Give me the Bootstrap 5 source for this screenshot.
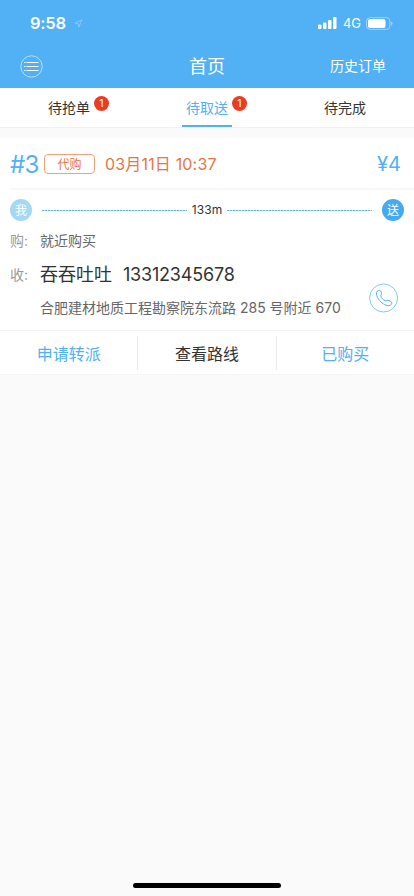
<!DOCTYPE html>
<html lang="zh-CN">
<head>
<meta charset="utf-8">
<meta name="viewport" content="width=device-width, initial-scale=1">
<title>首页</title>
<link href="https://cdn.jsdelivr.net/npm/bootstrap@5.3.0/dist/css/bootstrap.min.css" rel="stylesheet">
<style>
:root{--sky:#52b0f4;--ember:#e87544}
body{font-family:Inter,"Noto Sans CJK SC",sans-serif;font-size:14px;line-height:20px;color:#333;background:#fafafa;min-height:896px}
svg{display:block}
.app-header{background:var(--sky);height:88px}
.status-bar{height:44px;padding:2px 21px 0 30px}
.clock{font-size:16.5px;font-weight:600;letter-spacing:-.25px}
.signal-label{font-size:13px;font-weight:400;margin:0 5px 0 6px}
.title-bar{height:44px;padding:0 28px 0 20px}
.page-title{font-size:18px;font-weight:400;line-height:26px;padding-top:2px}
.side{width:80px}
.tab-strip{height:40px;border-bottom:1px solid #f0f0f0}
.tab-item{color:#333;height:39px;padding-top:10px}
.tab-item.active{color:var(--sky)}
.tab-line{width:50px;height:2px;background:var(--sky);bottom:0;left:50%;margin-left:-25px}
.count{width:15px;height:15px;left:46px;top:-3px;background:#e83c25;font-size:10.5px;line-height:15px}
.order{margin-top:10px;height:237px;border-bottom:1px solid #f4f4f4}
.order-head{height:52px;margin:0 0 0 11px;padding:2px 13px 0 0;border-bottom:2px solid #f8f8f8}
.num{font-size:24px;line-height:28px;padding-top:2px;color:var(--sky);width:33px;margin-left:-1px;letter-spacing:-.6px}
.kind{width:51px;height:20px;border:1px solid #f2a17d;border-radius:4px;color:var(--ember);font-size:12px;line-height:19px;margin-left:1px}
.when{font-size:16px;color:var(--ember);margin-left:10px;letter-spacing:.17px}
.price{font-size:20px;color:var(--sky)}
.route{height:40px;padding:0 10px}
.dot{width:22px;height:22px;color:#fff;font-size:12px;line-height:23px}
.dot-me{background:#a3d9f2}
.dot-to{background:#46aaf0}
.dash{height:1px;background:repeating-linear-gradient(90deg,#65b6e8 0 2px,#b7ddf5 2px 3px);margin:0 10px}
.route .dist{font-size:12px;margin:0 -5px;letter-spacing:.1px}
.line-key{width:30px;color:#999}
.info{padding:1px 15px 0 10px;height:100px}
.grey{color:#666}
.receiver{margin-top:11px}
.who{font-size:18px;line-height:26px;color:#333}
.phone-no{font-size:18px;margin-left:11px;letter-spacing:-.2px}
.address{margin:10px 0 0 30px;white-space:nowrap}
.call{width:30px;margin-top:52px}
.acts{height:44px;border-top:1px solid #f4f4f4;font-size:16px}
.acts>a{color:var(--sky);height:34px;line-height:36px}
.acts>a+a{border-left:1px solid #ebebeb}
.acts>a.dark{color:#333}
.home-bar{width:148px;height:5px;background:#000;margin-bottom:8px}
</style>
</head>
<body class="d-flex flex-column">
<header class="app-header text-white">
  <div class="status-bar d-flex align-items-center">
    <span class="clock">9:58</span>
    <svg class="ms-2" width="9" height="9" viewBox="0 0 9 9" fill="none" stroke="#84c9f8" stroke-width="1"><path d="M.8 4.2 8 .8 4.8 8.1 4.3 4.7Z"/></svg>
    <svg class="ms-auto" width="19" height="12" viewBox="0 0 19 12" fill="#fff"><rect y="7.5" width="3.5" height="4.5" rx="1"/><rect x="5" y="5.5" width="3.5" height="6.5" rx="1"/><rect x="10" y="3" width="3.5" height="9" rx="1"/><rect x="15" width="3.5" height="12" rx="1"/></svg>
    <span class="signal-label">4G</span>
    <svg width="27" height="13" viewBox="0 0 27 13"><rect x=".6" y=".6" width="23.3" height="11.8" rx="3.4" fill="none" stroke="#a1d4f8"/><rect x="2" y="2" width="17.5" height="9" rx="2" fill="#fff"/><path d="M25.2 4.5c1.7.5 1.7 3.5 0 4Z" fill="#a1d4f8"/></svg>
  </div>
  <div class="title-bar d-flex align-items-center justify-content-between">
    <div class="side"><svg width="23" height="23" viewBox="0 0 23 23" fill="none" stroke="#fff"><circle cx="11.5" cy="11.5" r="10.7" stroke="#b5dffa"/><path d="M4.2 7.5h1.4M6.5 7.5h12M4.2 11.5h1.4M6.5 11.5h12M4.2 15.5h1.4M6.5 15.5h12"/></svg></div>
    <h1 class="page-title mb-0 ps-2">首页</h1>
    <div class="side text-end">历史订单</div>
  </div>
</header>
<nav class="tab-strip row g-0 bg-white text-center">
  <a class="tab-item col text-decoration-none" href="#"><span class="position-relative">待抢单<span class="count position-absolute rounded-circle text-white">1</span></span></a>
  <a class="tab-item col active position-relative text-decoration-none" href="#"><span class="position-relative">待取送<span class="count position-absolute rounded-circle text-white">1</span></span><span class="tab-line position-absolute"></span></a>
  <a class="tab-item col text-decoration-none" href="#">待完成</a>
</nav>
<main class="order bg-white">
  <div class="order-head d-flex align-items-center">
    <span class="num">#3</span>
    <span class="kind text-center">代购</span>
    <span class="when">03月11日 10:37</span>
    <span class="price ms-auto">¥4</span>
  </div>
  <div class="route d-flex align-items-center">
    <span class="dot dot-me rounded-circle text-center">我</span>
    <span class="dash flex-fill"></span>
    <span class="dist">133m</span>
    <span class="dash flex-fill"></span>
    <span class="dot dot-to rounded-circle text-center">送</span>
  </div>
  <div class="info d-flex">
    <div class="flex-fill">
      <div class="d-flex"><span class="line-key">购:</span><span class="grey">就近购买</span></div>
      <div class="d-flex align-items-center receiver"><span class="line-key">收:</span><span class="who">吞吞吐吐</span><span class="phone-no">13312345678</span></div>
      <div class="grey address">合肥建材地质工程勘察院东流路 285 号附近 670</div>
    </div>
    <a class="call" href="#" aria-label="电话"><svg width="30" height="30" viewBox="0 0 30 30" fill="none" stroke="#52b0f4"><circle cx="14.6" cy="15" r="14" stroke="#85c8f8"/><path d="M8.2 8.3c1.5-1.6 3.4-1.1 4.1.8.8 2.1-.8 2.7-.5 4 .4 1.8 2.6 4.1 4.5 4.6 1.4.4 2-.9 3.7-.2l2 1.1c1.2.7 1.1 2.1-.1 3.2-1.8 1.8-5.6.6-8.7-1.8-3.5-2.7-7.4-8.6-5-11.7Z"/></svg></a>
  </div>
  <div class="acts row g-0 align-items-center text-center">
    <a class="col text-decoration-none" href="#">申请转派</a>
    <a class="col text-decoration-none dark" href="#">查看路线</a>
    <a class="col text-decoration-none" href="#">已购买</a>
  </div>
</main>
<div class="home-bar rounded-pill mx-auto mt-auto"></div>
<script src="https://cdn.jsdelivr.net/npm/bootstrap@5.3.0/dist/js/bootstrap.bundle.min.js"></script>
</body>
</html>
